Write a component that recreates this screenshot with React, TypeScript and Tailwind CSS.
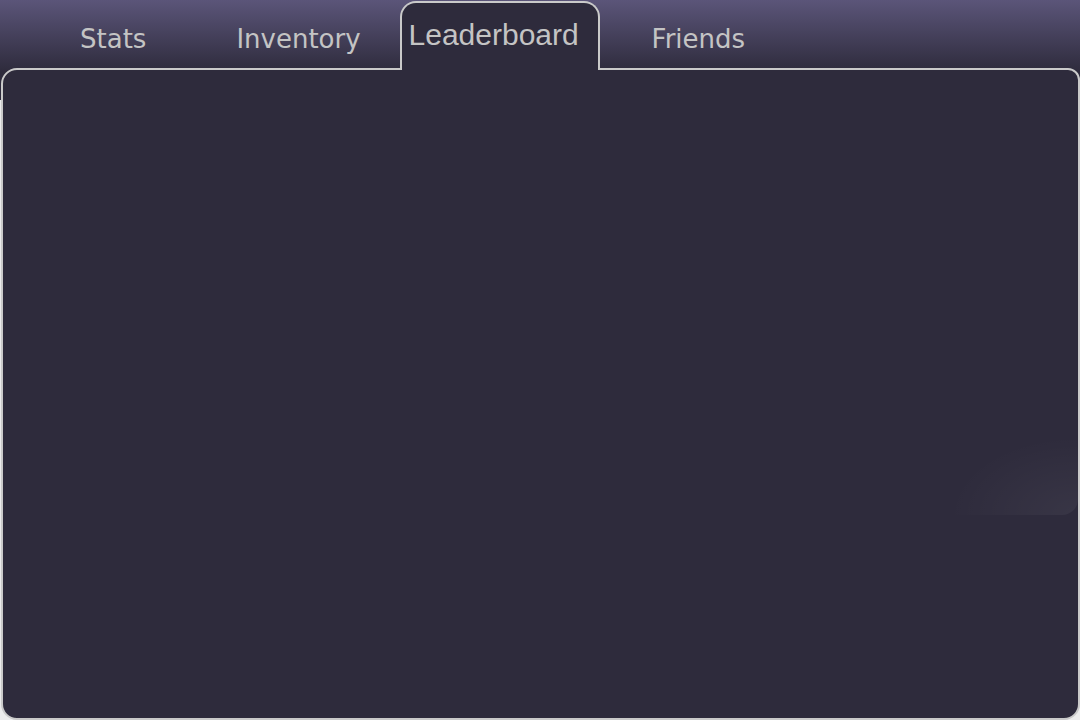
/**
 * Profile tabs — header strip with four tabs, Leaderboard active, empty panel below.
 */
const TAB_TEXT = 'text-[26px] leading-[30px] text-[#c4c4c4] [font-family:"DejaVu_Sans",Verdana,sans-serif]';

function Tab({ label, className }: { label: string; className: string }) {
  return <div className={`${TAB_TEXT} mb-[16px] ${className}`}>{label}</div>;
}

export default function App() {
  return (
    <main className="h-[720px] w-[1080px] overflow-hidden bg-[linear-gradient(to_bottom,#5b5579_0px,#2e2b3c_72px,#2e2b3c_100px,#ececec_100px)]">
      <nav className="relative z-10 flex h-[70px] items-end">
        <Tab label="Stats" className="ml-[80px]" />
        <Tab label="Inventory" className="ml-[90px]" />
        <div className="ml-[39px] mt-px h-[69px] w-[200px] self-start rounded-t-[16px] border-2 border-b-0 border-[#cacaca] bg-[#2e2b3c] pl-[7px] pt-[15px]">
          <span className='text-[30px] leading-[34px] text-[#c4c4c4] [font-family:"Liberation_Sans",Arial,sans-serif]'>
            Leaderboard
          </span>
        </div>
        <Tab label="Friends" className="ml-[52px]" />
      </nav>

      <section className="relative -mt-[2px] ml-px h-[652px] w-[1079px] rounded-[16px] rounded-tr-[12px] border-2 border-[#cacaca] bg-[#2e2b3c]">
        {/* faint glow near the right edge */}
        <div className="absolute right-0 top-[365px] h-[80px] w-[130px] rounded-br-[16px] bg-[radial-gradient(ellipse_at_100%_100%,rgba(255,255,255,0.05),transparent_70%)]" />
      </section>
    </main>
  );
}
